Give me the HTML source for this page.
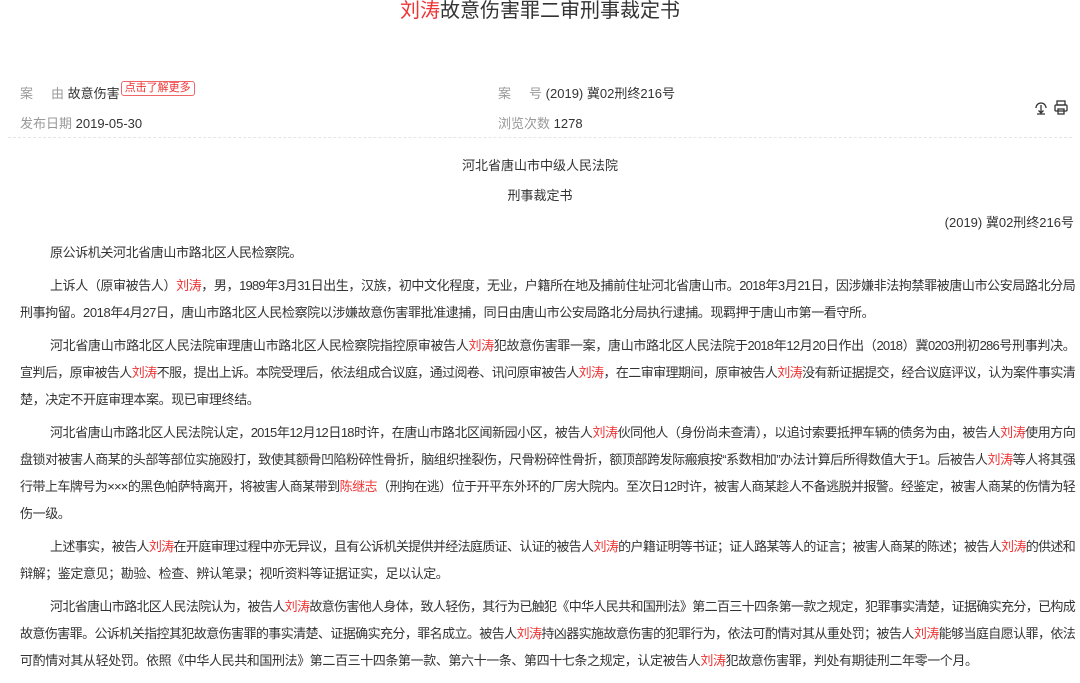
<!DOCTYPE html>
<html><head><meta charset="utf-8">
<style>
body{margin:0;width:1080px;height:683px;overflow:hidden;background:#fff;font-family:"Liberation Sans","Noto Sans CJK SC",sans-serif;color:#333;position:relative}
.t{position:absolute;top:-3px;left:0;width:1080px;text-align:center;font-size:20px;color:#333;line-height:28px}
.r{color:#e33}
.m{position:absolute;font-size:13px;line-height:16px;color:#333}
.g{color:#999}
.tag{display:inline-block;border:1px solid #e66;color:#e33;border-radius:3px;font-size:11px;line-height:13px;padding:0 3px;position:relative;top:-7px;margin-left:1px}
.hr{position:absolute;left:8px;right:8px;top:137px;border-top:1px dashed #e6e6e6}
.c{position:absolute;left:0;width:1080px;text-align:center;font-size:13px}
.body{position:absolute;left:20px;top:239px;width:1055px;font-size:13px;line-height:27px;color:#333;letter-spacing:-0.8px}
.body p{margin:0 0 6px 0}
.body b{font-weight:normal;display:block;white-space:nowrap;text-align:justify;text-align-last:justify}
.body b.f{padding-left:30px}
.body b.l{text-align-last:left;letter-spacing:-0.4px}
</style></head><body>
<div class="t"><span class="r">刘涛</span>故意伤害罪二审刑事裁定书</div>
<div class="m" style="left:20px;top:86px"><span class="g">案&nbsp;&nbsp;&nbsp;&nbsp;&nbsp;由</span> 故意伤害<span class="tag">点击了解更多</span></div>
<div class="m" style="left:498px;top:86px"><span class="g">案&nbsp;&nbsp;&nbsp;&nbsp;&nbsp;号</span> (2019) 冀02刑终216号</div>
<div class="m" style="left:20px;top:116px"><span class="g">发布日期</span> 2019-05-30</div>
<div class="m" style="left:498px;top:116px"><span class="g">浏览次数</span> 1278</div>
<svg style="position:absolute;left:1033px;top:98px" width="40" height="18" viewBox="0 0 40 18" fill="none" stroke="#333" stroke-width="1.3">
<path d="M3 10a5 5 0 1 1 10 0M8 7v8M5.5 12.5 8 15l2.5-2.5M4 16h8"/>
<rect x="24" y="3" width="8" height="4"/><rect x="22" y="7" width="12" height="6" rx="1"/><rect x="25" y="11" width="6" height="5"/>
</svg>
<div class="hr"></div>
<div class="c" style="top:155px">河北省唐山市中级人民法院</div>
<div class="c" style="top:185px">刑事裁定书</div>
<div class="m" style="right:6px;top:215px">(2019) 冀02刑终216号</div>
<div class="body">
<p><b class="f l">原公诉机关河北省唐山市路北区人民检察院。</b></p>
<p><b class="f">上诉人（原审被告人）<span class="r">刘涛</span>，男，1989年3月31日出生，汉族，初中文化程度，无业，户籍所在地及捕前住址河北省唐山市。2018年3月21日，因涉嫌非法拘禁罪被唐山市公安局路北分局</b><b class="l">刑事拘留。2018年4月27日，唐山市路北区人民检察院以涉嫌故意伤害罪批准逮捕，同日由唐山市公安局路北分局执行逮捕。现羁押于唐山市第一看守所。</b></p>
<p><b class="f">河北省唐山市路北区人民法院审理唐山市路北区人民检察院指控原审被告人<span class="r">刘涛</span>犯故意伤害罪一案，唐山市路北区人民法院于2018年12月20日作出（2018）冀0203刑初286号刑事判决。</b><b>宣判后，原审被告人<span class="r">刘涛</span>不服，提出上诉。本院受理后，依法组成合议庭，通过阅卷、讯问原审被告人<span class="r">刘涛</span>，在二审审理期间，原审被告人<span class="r">刘涛</span>没有新证据提交，经合议庭评议，认为案件事实清</b><b class="l">楚，决定不开庭审理本案。现已审理终结。</b></p>
<p><b class="f">河北省唐山市路北区人民法院认定，2015年12月12日18时许，在唐山市路北区闻新园小区，被告人<span class="r">刘涛</span>伙同他人（身份尚未查清），以追讨索要抵押车辆的债务为由，被告人<span class="r">刘涛</span>使用方向</b><b>盘锁对被害人商某的头部等部位实施殴打，致使其额骨凹陷粉碎性骨折，脑组织挫裂伤，尺骨粉碎性骨折，额顶部跨发际瘢痕按“系数相加”办法计算后所得数值大于1。后被告人<span class="r">刘涛</span>等人将其强</b><b>行带上车牌号为×××的黑色帕萨特离开，将被害人商某带到<span class="r">陈继志</span>（刑拘在逃）位于开平东外环的厂房大院内。至次日12时许，被害人商某趁人不备逃脱并报警。经鉴定，被害人商某的伤情为轻</b><b class="l">伤一级。</b></p>
<p><b class="f">上述事实，被告人<span class="r">刘涛</span>在开庭审理过程中亦无异议，且有公诉机关提供并经法庭质证、认证的被告人<span class="r">刘涛</span>的户籍证明等书证；证人路某等人的证言；被害人商某的陈述；被告人<span class="r">刘涛</span>的供述和</b><b class="l">辩解；鉴定意见；勘验、检查、辨认笔录；视听资料等证据证实，足以认定。</b></p>
<p><b class="f">河北省唐山市路北区人民法院认为，被告人<span class="r">刘涛</span>故意伤害他人身体，致人轻伤，其行为已触犯《中华人民共和国刑法》第二百三十四条第一款之规定，犯罪事实清楚，证据确实充分，已构成</b><b>故意伤害罪。公诉机关指控其犯故意伤害罪的事实清楚、证据确实充分，罪名成立。被告人<span class="r">刘涛</span>持凶器实施故意伤害的犯罪行为，依法可酌情对其从重处罚；被告人<span class="r">刘涛</span>能够当庭自愿认罪，依法</b><b class="l">可酌情对其从轻处罚。依照《中华人民共和国刑法》第二百三十四条第一款、第六十一条、第四十七条之规定，认定被告人<span class="r">刘涛</span>犯故意伤害罪，判处有期徒刑二年零一个月。</b></p>
</div>
</body></html>
